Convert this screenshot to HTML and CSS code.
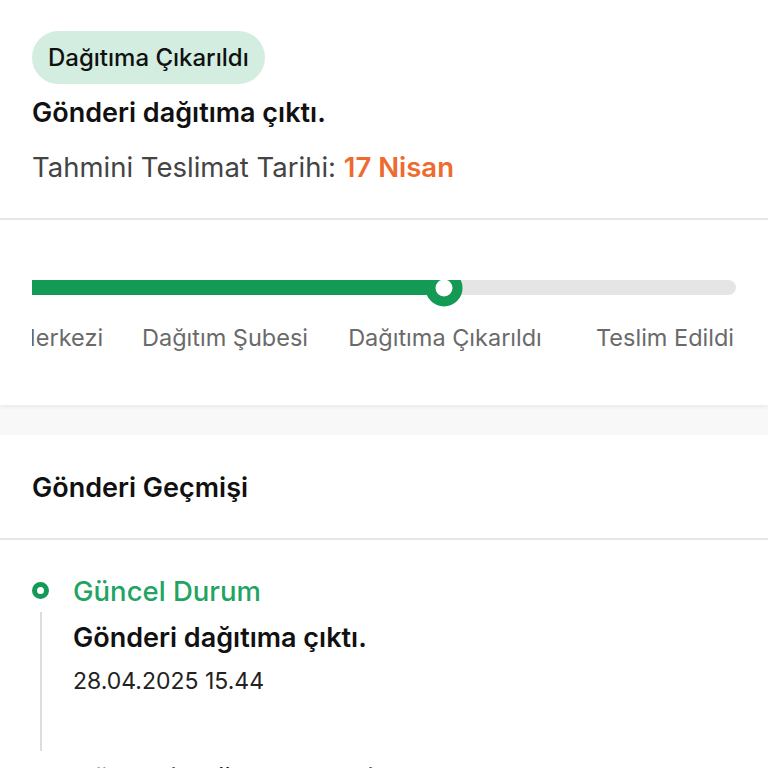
FILE: index.html
```html
<!DOCTYPE html>
<html lang="tr">
<head>
  <meta charset="UTF-8">
  <meta name="viewport" content="width=device-width, initial-scale=1.0">
  <title>Gönderi Takibi</title>
  <link rel="stylesheet" href="styles.css">
</head>
<body>
  <section class="summary">
    <span class="badge">Dağıtıma Çıkarıldı</span>
    <p class="summary-title">Gönderi dağıtıma çıktı.</p>
    <p class="eta">Tahmini Teslimat Tarihi: <span class="eta-date">17 Nisan</span></p>
  </section>

  <section class="progress">
    <div class="steps-viewport">
      <div class="steps-strip">
        <div class="track">
          <div class="track-fill"></div>
          <span class="knob"></span>
        </div>
        <div class="step-labels">
          <span class="first-step">Aktarma Merkezi</span>
          <span>Dağıtım Şubesi</span>
          <span>Dağıtıma Çıkarıldı</span>
          <span>Teslim Edildi</span>
        </div>
      </div>
    </div>
  </section>

  <section class="history">
    <h2 class="history-title">Gönderi Geçmişi</h2>
    <ul class="timeline">
      <li class="event current">
        <span class="event-dot"></span>
        <p class="event-status">Güncel Durum</p>
        <p class="event-text">Gönderi dağıtıma çıktı.</p>
        <p class="event-date">28.04.2025 15.44</p>
      </li>
      <li class="event">
        <span class="event-dot"></span>
        <p class="event-text">Gönderi dağıtım şubesine ulaştı.</p>
        <p class="event-date">28.04.2025 08.12</p>
      </li>
    </ul>
  </section>
</body>
</html>
```

FILE: styles.css
```css
* {
  box-sizing: border-box;
}

html, body {
  height: 100%;
  overflow: hidden;
}

body {
  font-family: Inter, "Noto Sans", sans-serif;
  margin: 0;
  background-color: #f8f8f8;
  color: #111;
}

p {
  margin: 0;
}

/* Üst özet */
.summary {
  background: #fff;
  padding: 31px 32px 33px;
  border-bottom: 2px solid #e6e6e6;
}

.badge {
  display: inline-block;
  background-color: #d3ede0;
  color: #111;
  font-size: 24px;
  font-weight: 500;
  line-height: 53px;
  padding: 0 16px;
  border-radius: 27px;
}

.summary-title {
  margin-top: 11px;
  font-size: 27px;
  font-weight: 600;
  line-height: 36px;
}

.eta {
  margin-top: 18px;
  font-size: 27.5px;
  color: #444;
  line-height: 36px;
}

.eta-date {
  color: #ee6a2f;
  font-weight: 600;
}

/* İlerleme çubuğu */
.progress {
  background: #fff;
  padding: 60px 32px 52px;
  box-shadow: 0 2px 4px rgba(0, 0, 0, 0.06);
  margin-bottom: 30px;
}

.steps-viewport {
  overflow: hidden;
}

.steps-strip {
  width: 841px;
  margin-left: -137px;
}

.track {
  position: relative;
  height: 15px;
  background: #e5e5e5;
  border-radius: 8px;
}

.track-fill {
  width: 549px;
  height: 100%;
  background: #149a55;
}

.knob {
  position: absolute;
  left: 549px;
  top: 50%;
  width: 37px;
  height: 37px;
  transform: translate(-50%, -50%);
  border-radius: 50%;
  background: #fff;
  border: 10px solid #149a55;
}

.step-labels {
  display: grid;
  grid-template-columns: repeat(4, 220px);
  margin-top: 28px;
  font-size: 23.5px;
  color: #6a6a6a;
  line-height: 30px;
  white-space: nowrap;
}

.step-labels span {
  text-align: center;
}

.step-labels .first-step {
  padding-left: 8px;
}

/* Geçmiş */
.history {
  background: #fff;
  min-height: 400px;
}

.history-title {
  margin: 0;
  padding: 35px 32px 32px;
  font-size: 27px;
  font-weight: 600;
  line-height: 36px;
  border-bottom: 2px solid #e6e6e6;
}

.timeline {
  list-style: none;
  margin: 0;
  padding: 33px 32px 0;
}

.event {
  position: relative;
  padding: 0 0 55px 41px;
}

.event::before {
  content: "";
  position: absolute;
  left: 8px;
  top: 39px;
  bottom: 0;
  width: 2px;
  background: #dddddd;
}

.event-dot {
  position: absolute;
  left: 0;
  top: 9px;
  width: 17px;
  height: 17px;
  border-radius: 50%;
  border: 5px solid #cfcfcf;
  background: #fff;
}

.current .event-dot {
  border-color: #149a55;
}

.event-status {
  font-size: 27.5px;
  font-weight: 500;
  color: #1fa463;
  line-height: 36px;
}

.event-text {
  margin-top: 11px;
  font-size: 27px;
  font-weight: 600;
  line-height: 36px;
}

.event + .event .event-text {
  margin-top: 10px;
}

.event + .event .event-dot {
  top: 16px;
}

.event-date {
  margin-top: 10px;
  font-size: 23px;
  color: #222;
  line-height: 30px;
}
```
